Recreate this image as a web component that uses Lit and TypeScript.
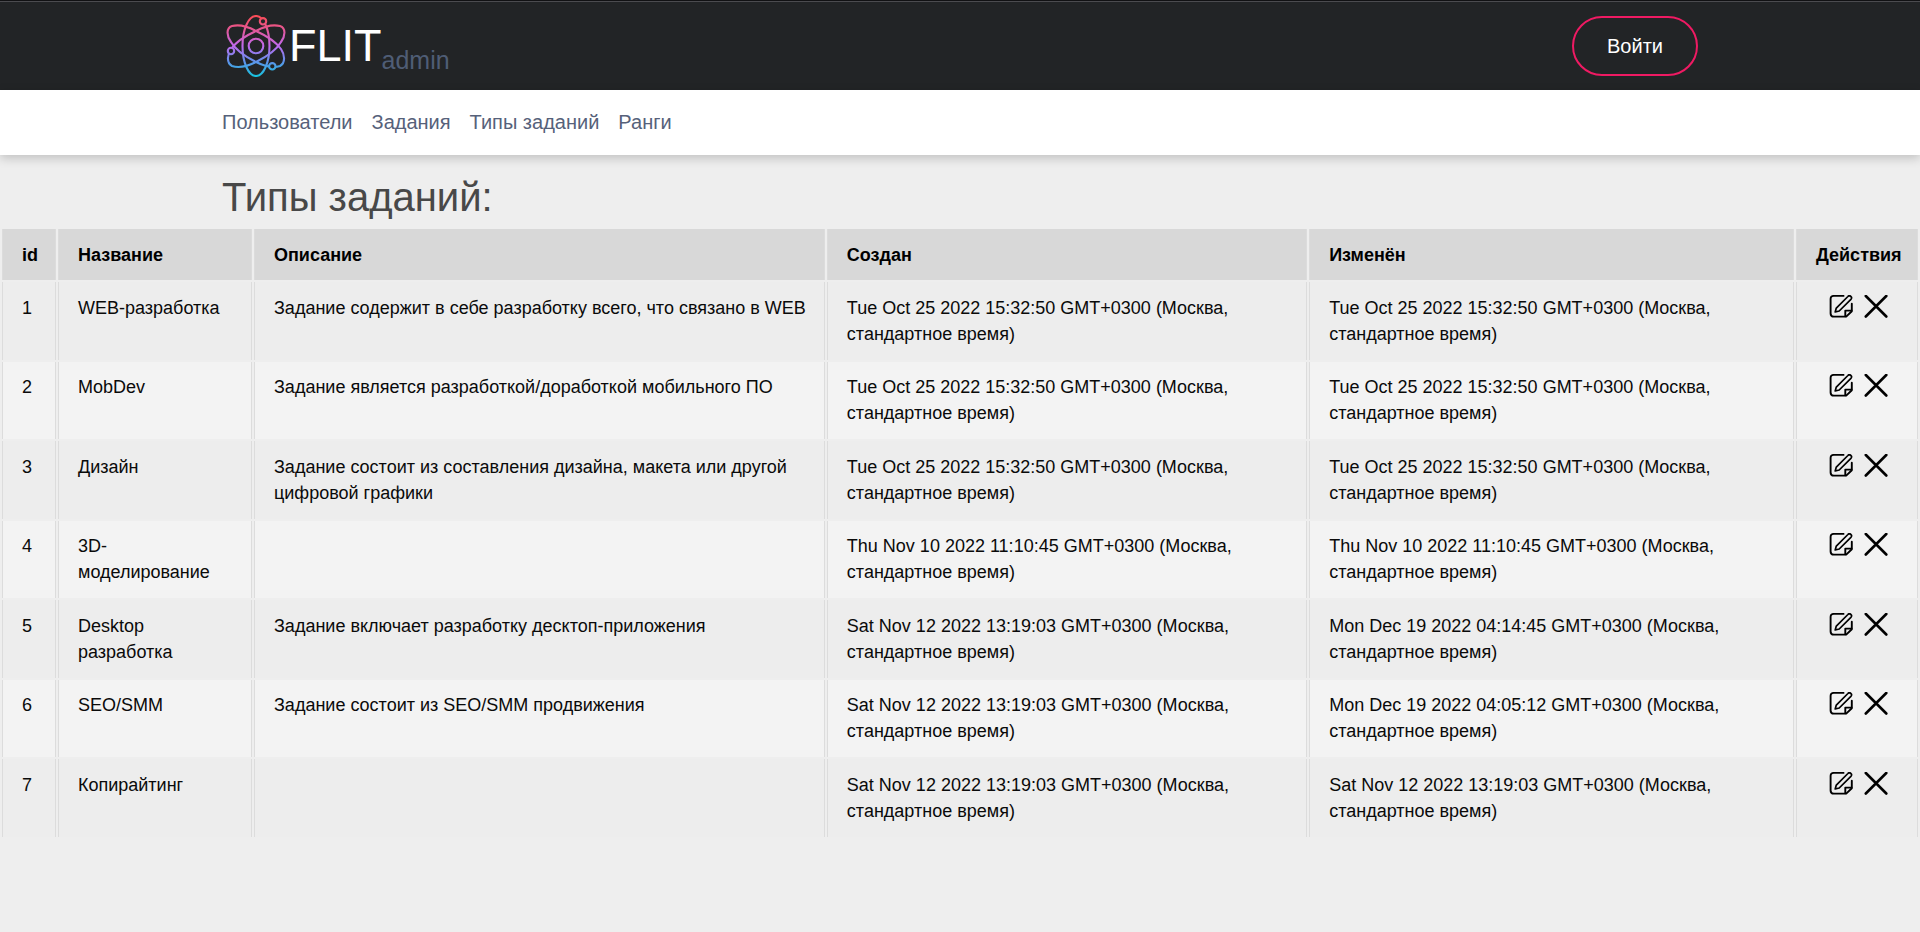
import { LitElement, html, css, svg } from "lit";
import { customElement, property } from "lit/decorators.js";

interface TaskType {
  id: number;
  name: string;
  description: string;
  created: string;
  updated: string;
}

const ZONE = "GMT+0300 (Москва, стандартное время)";
const OCT = `Tue Oct 25 2022 15:32:50 ${ZONE}`;
const NOV = `Sat Nov 12 2022 13:19:03 ${ZONE}`;
const NOV10 = `Thu Nov 10 2022 11:10:45 ${ZONE}`;

const TASK_TYPES: TaskType[] = [
  { id: 1, name: "WEB-разработка", description: "Задание содержит в себе разработку всего, что связано в WEB", created: OCT, updated: OCT },
  { id: 2, name: "MobDev", description: "Задание является разработкой/доработкой мобильного ПО", created: OCT, updated: OCT },
  { id: 3, name: "Дизайн", description: "Задание состоит из составления дизайна, макета или другой цифровой графики", created: OCT, updated: OCT },
  { id: 4, name: "3D-моделирование", description: "", created: NOV10, updated: NOV10 },
  { id: 5, name: "Desktop разработка", description: "Задание включает разработку десктоп-приложения", created: NOV, updated: `Mon Dec 19 2022 04:14:45 ${ZONE}` },
  { id: 6, name: "SEO/SMM", description: "Задание состоит из SEO/SMM продвижения", created: NOV, updated: `Mon Dec 19 2022 04:05:12 ${ZONE}` },
  { id: 7, name: "Копирайтинг", description: "", created: NOV, updated: NOV },
];

@customElement("site-header")
export class SiteHeader extends LitElement {
  static styles = css`
    :host {
      display: block;
      background: #222426;
      border-top: 1px solid #111113;
    }
    .line {
      border-top: 1px solid #4b4b4f;
    }
    .bar {
      box-sizing: border-box;
      max-width: 1476px;
      margin: 0 auto;
      padding: 13px 0;
      display: flex;
      align-items: center;
      justify-content: space-between;
    }
    .brand {
      display: flex;
      align-items: center;
      padding-left: 4px;
      color: #fff;
      text-decoration: none;
    }
    .mark {
      display: block;
      width: 60px;
      height: 62px;
      margin-right: 3px;
    }
    .name {
      font-size: 45px;
      line-height: 60px;
    }
    .role {
      font-size: 25px;
      line-height: 34px;
      color: #4f5d75;
      align-self: flex-end;
    }
    .login {
      box-sizing: border-box;
      height: 60px;
      padding: 0 33px;
      border: 2px solid #ef1a63;
      border-radius: 30px;
      background: transparent;
      color: #fff;
      font: inherit;
      font-size: 20px;
      cursor: pointer;
    }
  `;

  render() {
    return html`
      <div class="line">
        <div class="bar">
          <a class="brand" href="#">
            <svg class="mark" viewBox="226 15 60 62" fill="none" stroke-width="2.1" aria-hidden="true">
              <defs>
                <linearGradient id="glow" gradientUnits="userSpaceOnUse" x1="0" y1="15" x2="0" y2="77">
                  <stop offset="0" stop-color="#fb4b52" />
                  <stop offset="0.25" stop-color="#e2589a" />
                  <stop offset="0.5" stop-color="#c069ee" />
                  <stop offset="0.75" stop-color="#5f92ea" />
                  <stop offset="1" stop-color="#14c4dd" />
                </linearGradient>
              </defs>
              <g stroke="url(#glow)">
                <ellipse cx="256" cy="46" rx="13.5" ry="30" />
                <path d="M256 31C265 26 274 24.500 280 26C286 28 285.500 36 281 42C277 49 266 57 256 62C247 66.500 238 68 232 66C226.500 63 227 55 231 49C236 42 246 35.500 256 31Z" />
                <path d="M256 31C247 26 238 24.500 232 26C226 28 226.500 36 231 42C235 49 246 57 256 62C265 66.500 274 68 280 66C285.500 63 285 55 281 49C276 42 266 35.500 256 31Z" />
                <circle cx="256" cy="46" r="7.300" />
              </g>
              <g stroke="url(#glow)" fill="#222426">
                <circle cx="263" cy="21.300" r="3.200" />
                <circle cx="231" cy="51" r="3.200" />
                <circle cx="272.300" cy="66.300" r="3.200" />
              </g>
            </svg>
            <span class="name">FLIT</span>
            <span class="role">admin</span>
          </a>
          <button class="login" type="button">Войти</button>
        </div>
      </div>
    `;
  }
}

@customElement("site-nav")
export class SiteNav extends LitElement {
  static styles = css`
    :host {
      display: block;
      background: #fff;
      box-shadow: 0 3px 10px rgba(0, 0, 0, 0.2);
    }
    .links {
      max-width: 1476px;
      margin: 0 auto;
      padding: 17px 0 18px;
      display: flex;
      gap: 19px;
    }
    .link {
      color: #56617a;
      font-size: 20px;
      line-height: 30px;
      text-decoration: none;
    }
  `;

  render() {
    const links = ["Пользователи", "Задания", "Типы заданий", "Ранги"];
    return html`<nav class="links">
      ${links.map((label) => html`<a class="link" href="#">${label}</a>`)}
    </nav>`;
  }
}

@customElement("task-type-table")
export class TaskTypeTable extends LitElement {
  @property({ attribute: false }) rows: TaskType[] = [];

  static styles = css`
    :host {
      display: block;
    }
    .table {
      width: 100%;
      table-layout: fixed;
      border-collapse: separate;
      border-spacing: 2px;
      font-size: 18px;
      line-height: 26px;
      color: #0a0a0a;
    }
    .col-id {
      width: 54px;
    }
    .col-name {
      width: 194px;
    }
    .col-description {
      width: 29.95%;
    }
    .col-created {
      width: 25.2%;
    }
    .col-actions {
      width: 122px;
    }
    .head,
    .cell {
      box-sizing: border-box;
      padding: 13px 17px 13px 19px;
      border: 0 solid #dcdcdc;
      border-width: 0 1px;
      text-align: left;
      vertical-align: top;
    }
    .head {
      padding-bottom: 12px;
      background: #d8d8d8;
      color: #000;
      white-space: nowrap;
    }
    .row .cell {
      background: #ededed;
    }
    .row:nth-child(even) .cell {
      padding-top: 12px;
      background: #f3f3f3;
    }
    .actions {
      display: flex;
      justify-content: center;
      gap: 11px;
    }
    .action {
      display: block;
      padding: 0;
      border: 0;
      background: none;
      color: #000;
      cursor: pointer;
    }
    .icon {
      display: block;
      width: 24px;
      height: 24px;
    }
  `;

  private editIcon = svg`
    <g fill="none" stroke="currentColor" stroke-width="1.900" stroke-linecap="round" stroke-linejoin="round">
      <path d="M14.500 1.900H4.800Q1.600 1.900 1.600 5.100V19.400Q1.600 22.600 4.800 22.600H17.200L22.800 17.200V9.800" />
      <path d="M16.300 22.300V16.600H22.500" />
      <path d="M6.200 18L7.300 14.100L18.900 2.500A1.950 1.950 0 0 1 21.900 5.300L10.200 17L6.200 18Z" stroke-width="1.700" />
    </g>`;

  private deleteIcon = svg`
    <path d="M1.800 2L22.300 22.500M22.300 2L1.800 22.500" fill="none" stroke="currentColor" stroke-width="2.600" stroke-linecap="round" />`;

  render() {
    return html`
      <table class="table">
        <colgroup>
          <col class="col-id" />
          <col class="col-name" />
          <col class="col-description" />
          <col class="col-created" />
          <col />
          <col class="col-actions" />
        </colgroup>
        <thead>
          <tr>
            ${["id", "Название", "Описание", "Создан", "Изменён", "Действия"].map(
              (title) => html`<th class="head" scope="col">${title}</th>`
            )}
          </tr>
        </thead>
        <tbody>
          ${this.rows.map(
            (row) => html`<tr class="row">
              <td class="cell">${row.id}</td>
              <td class="cell">${row.name}</td>
              <td class="cell">${row.description}</td>
              <td class="cell">${row.created}</td>
              <td class="cell">${row.updated}</td>
              <td class="cell">
                <div class="actions">
                  <button class="action" type="button" aria-label="Изменить">
                    <svg class="icon" viewBox="0 1 24 24">${this.editIcon}</svg>
                  </button>
                  <button class="action" type="button" aria-label="Удалить">
                    <svg class="icon" viewBox="0 1 24 24">${this.deleteIcon}</svg>
                  </button>
                </div>
              </td>
            </tr>`
          )}
        </tbody>
      </table>
    `;
  }
}

@customElement("app-root")
export class AppRoot extends LitElement {
  static styles = css`
    :host {
      display: block;
      min-height: 100vh;
      background: #eee;
      font-family: "Liberation Sans", Arial, sans-serif;
    }
    .title {
      max-width: 1476px;
      margin: 0 auto;
      padding: 18px 0 6px;
      font-size: 40px;
      font-weight: 400;
      line-height: 48px;
      color: #484848;
    }
  `;

  render() {
    return html`
      <site-header></site-header>
      <site-nav></site-nav>
      <main>
        <h1 class="title">Типы заданий:</h1>
        <task-type-table .rows=${TASK_TYPES}></task-type-table>
      </main>
    `;
  }
}
